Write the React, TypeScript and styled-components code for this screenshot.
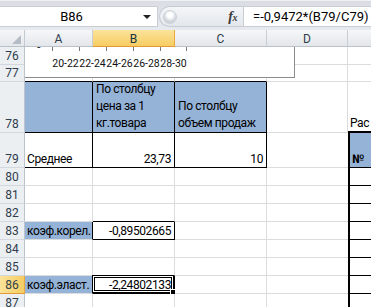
import React from "react";
import styled, { createGlobalStyle } from "styled-components";

const BLACK = "1px solid #000";
const THICK = "2px solid #000";
const GRID = "1px solid #dadcdd";
const BLUE = "#95b3d7";

const GlobalStyle = createGlobalStyle`
  html, body {
    margin: 0;
    padding: 0;
    background: #fff;
    overflow: hidden;
  }
  body {
    font-family: Roboto, "Liberation Sans", sans-serif;
  }
`;

const Window = styled.div`
  width: 371px;
  height: 307px;
  overflow: hidden;
  display: flex;
  flex-direction: column;
  background: #fff;
`;

/* ---------- formula bar ---------- */

const FormulaBar = styled.div`
  flex: none;
  height: 30px;
  box-sizing: border-box;
  display: flex;
  padding: 5px 0 3px;
  background: linear-gradient(#dadee4, #e6e9ed);
  border-top: 1px solid #eef0f3;
`;

const NameBox = styled.div`
  width: 158px;
  display: flex;
  align-items: center;
  background: #fff;
  border: 1px solid #c9ced5;
  border-left: none;
  box-sizing: border-box;
  font-size: 13px;
  color: #000;
`;

const NameText = styled.span`
  flex: 1;
  text-align: center;
`;

const DropArrow = styled.span`
  width: 0;
  height: 0;
  margin: 1px 6px 0 0;
  border-left: 4px solid transparent;
  border-right: 4px solid transparent;
  border-top: 4px solid #222;
`;

const FxPill = styled.div`
  width: 84px;
  margin-left: 1px;
  display: flex;
  align-items: center;
  justify-content: space-between;
  box-sizing: border-box;
  padding: 0 6px 0 3px;
  background: linear-gradient(#f4f6f8, #e3e7ec);
  border: 1px solid #c6ccd4;
  border-right: none;
  border-radius: 11px 0 0 11px;
`;

const Knob = styled.span`
  width: 12px;
  height: 12px;
  border-radius: 50%;
  background: radial-gradient(circle at 50% 35%, #ffffff 0 25%, #d3d8de 60%, #c0c6ce);
  border: 1px solid #cdd2d9;
`;

const FxLabel = styled.span`
  font-family: "Liberation Serif", serif;
  font-style: italic;
  font-weight: 700;
  font-size: 14px;
  color: #3a3a3a;
  letter-spacing: -0.5px;

  small {
    font-size: 10px;
  }
`;

const FormulaInput = styled.div`
  flex: 1;
  display: flex;
  align-items: center;
  padding-left: 9px;
  background: #fff;
  border: 1px solid #c9ced5;
  border-right: none;
  font-size: 13px;
  color: #000;
  white-space: nowrap;
`;

/* ---------- sheet ---------- */

const Sheet = styled.div`
  position: relative;
  flex: none;
  display: grid;
  grid-template-columns: 25px 68px 82px 92px 81px 40px;
  grid-template-rows: 17px 18px 17px 51px 35px repeat(8, 18px);
  font-size: 12px;
`;

const Corner = styled.div`
  display: flex;
  align-items: flex-end;
  justify-content: flex-end;
  padding: 0 3px 2px 0;
  background: linear-gradient(#f5f6f8, #e4e7eb);
  border-right: 1px solid #c3c9d1;
  border-bottom: 1px solid #b9c1cb;
`;

const ColHead = styled.div<{ $active?: boolean }>`
  display: flex;
  align-items: center;
  justify-content: center;
  padding-top: 2px;
  box-sizing: border-box;
  color: ${(p) => (p.$active ? "#20303f" : "#2f3d4c")};
  background: ${(p) =>
    p.$active
      ? "linear-gradient(#fbe39a, #f6cd62)"
      : "linear-gradient(#f6f7f9, #e3e6ea)"};
  border-right: 1px solid ${(p) => (p.$active ? "#e9a93f" : "#c9ced5")};
  border-bottom: 1px solid ${(p) => (p.$active ? "#e49b35" : "#b9c1cb")};
`;

const RowHead = styled.div<{ $active?: boolean }>`
  display: flex;
  align-items: flex-end;
  justify-content: center;
  box-sizing: border-box;
  line-height: 16px;
  color: #2f3d4c;
  background: ${(p) =>
    p.$active ? "linear-gradient(90deg, #fbe39a, #f6cd62)" : "#eceff2"};
  border-right: 1px solid ${(p) => (p.$active ? "#e9a93f" : "#bcc4ce")};
  border-bottom: 1px solid ${(p) => (p.$active ? "#e49b35" : "#d3d8de")};
`;

type CellProps = {
  $fill?: string;
  $right?: boolean;
  $bold?: boolean;
  $r?: string;
  $b?: string;
  $l?: string;
};

const Cell = styled.div<CellProps>`
  position: relative;
  box-sizing: border-box;
  display: flex;
  align-items: flex-end;
  justify-content: ${(p) => (p.$right ? "flex-end" : "flex-start")};
  padding: 0 3px 0 2px;
  line-height: 15px;
  letter-spacing: -0.4px;
  white-space: nowrap;
  color: #000;
  font-weight: ${(p) => (p.$bold ? 700 : 400)};
  background: ${(p) => p.$fill || "#fff"};
  border-right: ${(p) => p.$r || GRID};
  border-bottom: ${(p) => p.$b || GRID};
  border-left: ${(p) => p.$l || "none"};
`;

const Wrapped = styled.div`
  padding-left: 1px;
  line-height: 17px;
  white-space: normal;
`;

const Selection = styled.div`
  position: absolute;
  top: -1px;
  left: -1px;
  right: 0;
  bottom: 0;
  border: 1px solid #000;
  box-shadow: inset 0 0 0 1px #fff, inset 0 0 0 2px #000;
  pointer-events: none;
`;

const FillHandle = styled.span`
  position: absolute;
  right: -4px;
  bottom: -4px;
  width: 5px;
  height: 5px;
  background: #000;
  border: 1px solid #fff;
`;

/* ---------- embedded chart (partly scrolled out) ---------- */

const Chart = styled.div`
  position: absolute;
  left: 25px;
  top: 17px;
  width: 270px;
  height: 31px;
  box-sizing: border-box;
  overflow: hidden;
  background: #fff;
  border-right: 1px solid #8c8c8c;
  border-bottom: 1px solid #8c8c8c;
  z-index: 2;
`;

const CutLabel = styled.span`
  position: absolute;
  left: 11px;
  top: -8px;
  font-size: 10px;
  color: #222;
`;

const Axis = styled.div`
  margin-left: 27px;
  display: flex;
  flex-direction: column;
`;

const Ticks = styled.div`
  display: flex;
  height: 4px;
`;

const Tick = styled.span<{ $last?: boolean }>`
  width: 27px;
  flex: none;
  box-sizing: border-box;
  border-left: 1px solid #7a7a7a;
  border-right: ${(p) => (p.$last ? "1px solid #7a7a7a" : "none")};
`;

const Labels = styled.div`
  display: flex;
  margin-top: 7px;
  font-size: 10.5px;
  color: #111;
  line-height: 12px;
`;

const AxisLabel = styled.span`
  width: 27px;
  flex: none;
  display: flex;
  justify-content: center;
  white-space: nowrap;
`;

const bins = ["20-22", "22-24", "24-26", "26-28", "28-30"];
const lowerRows = [80, 81, 82, 83, 84, 85, 86, 87];

const App = () => {
  return (
    <>
      <GlobalStyle />
      <Window>
        <FormulaBar>
          <NameBox>
            <NameText>B86</NameText>
            <DropArrow />
          </NameBox>
          <FxPill>
            <Knob />
            <FxLabel>
              f<small>x</small>
            </FxLabel>
          </FxPill>
          <FormulaInput>=-0,9472*(B79/C79)</FormulaInput>
        </FormulaBar>

        <Sheet>
          <Corner>
            <svg width="9" height="9" viewBox="0 0 9 9">
              <polygon points="9,0 9,9 0,9" fill="#b5bcc6" />
            </svg>
          </Corner>
          <ColHead>A</ColHead>
          <ColHead $active>B</ColHead>
          <ColHead>C</ColHead>
          <ColHead>D</ColHead>
          <ColHead />

          <RowHead>76</RowHead>
          <Cell />
          <Cell />
          <Cell />
          <Cell />
          <Cell />

          <RowHead>77</RowHead>
          <Cell $b={BLACK} />
          <Cell $b={BLACK} />
          <Cell $b={BLACK} />
          <Cell />
          <Cell />

          <RowHead>78</RowHead>
          <Cell $fill={BLUE} $r={BLACK} $b={BLACK} />
          <Cell $fill={BLUE} $r={BLACK} $b={BLACK}>
            <Wrapped>
              По столбцу
              <br />
              цена за 1
              <br />
              кг.товара
            </Wrapped>
          </Cell>
          <Cell $fill={BLUE} $r={BLACK} $b={BLACK}>
            <Wrapped>
              По столбцу
              <br />
              объем продаж
            </Wrapped>
          </Cell>
          <Cell />
          <Cell $b={THICK}>Рас</Cell>

          <RowHead>79</RowHead>
          <Cell $r={BLACK} $b={BLACK}>
            Среднее
          </Cell>
          <Cell $right $r={BLACK} $b={BLACK}>
            23,73
          </Cell>
          <Cell $right $r={BLACK} $b={BLACK}>
            10
          </Cell>
          <Cell $r="none" />
          <Cell $fill={BLUE} $bold $l={THICK} $b={BLACK}>
            №
          </Cell>

          {lowerRows.map((n) => (
            <React.Fragment key={n}>
              <RowHead $active={n === 86}>{n}</RowHead>
              {n === 83 || n === 86 ? (
                <Cell $fill={BLUE} $r={BLACK}>
                  {n === 83 ? "коэф.корел." : "коэф.эласт."}
                </Cell>
              ) : (
                <Cell />
              )}
              {n === 83 || n === 86 ? (
                <Cell $right $r={BLACK} $b={BLACK}>
                  {n === 83 ? "-0,89502665" : "-2,24802133"}
                  {n === 86 && (
                    <Selection>
                      <FillHandle />
                    </Selection>
                  )}
                </Cell>
              ) : (
                <Cell $b={n === 82 || n === 85 ? BLACK : undefined} />
              )}
              <Cell />
              <Cell $r="none" />
              <Cell $l={THICK} $b={BLACK} />
            </React.Fragment>
          ))}

          <Chart>
            <CutLabel>0</CutLabel>
            <Axis>
              <Ticks>
                {bins.map((b, i) => (
                  <Tick key={b} $last={i === bins.length - 1} />
                ))}
              </Ticks>
              <Labels>
                {bins.map((b) => (
                  <AxisLabel key={b}>{b}</AxisLabel>
                ))}
              </Labels>
            </Axis>
          </Chart>
        </Sheet>
      </Window>
    </>
  );
};

export default App;
